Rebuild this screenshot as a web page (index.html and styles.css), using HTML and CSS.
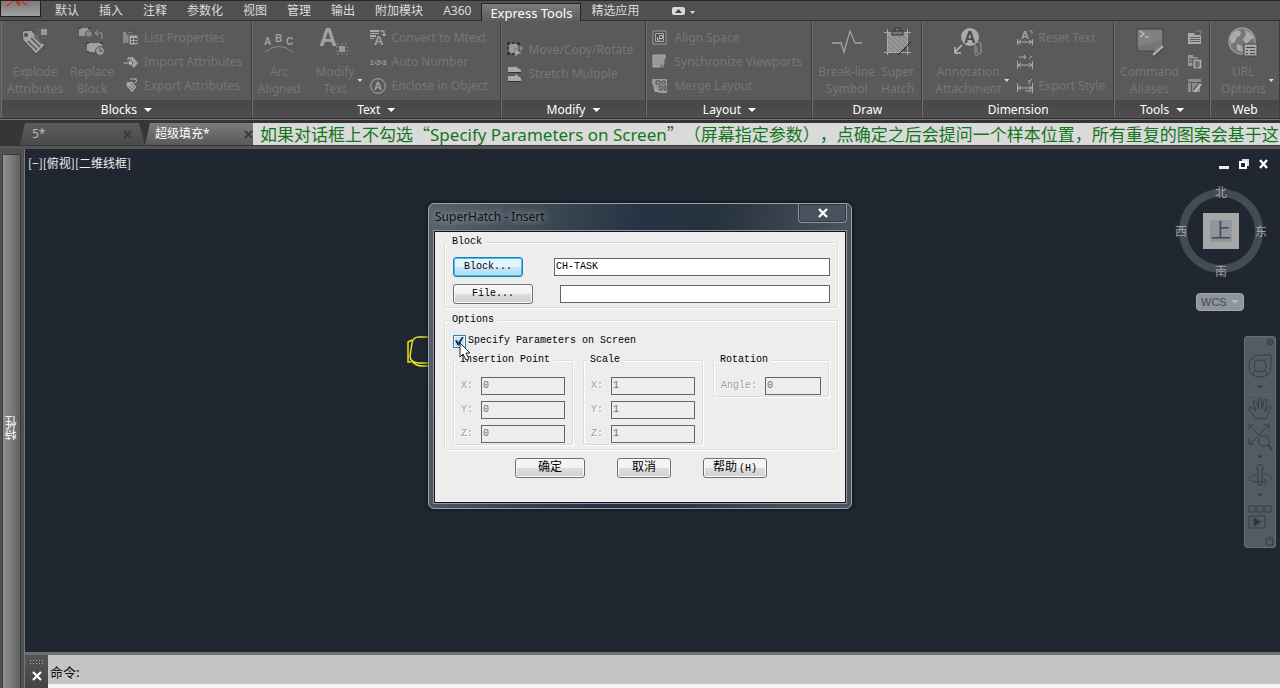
FILE: index.html
```html
<!DOCTYPE html>
<html lang="zh-CN">
<head>
<meta charset="utf-8">
<title>SuperHatch - Insert</title>
<link rel="stylesheet" href="styles.css">
</head>
<body>
<header class="menubar">
  <button class="app-button" aria-label="Application menu"><svg width="38" height="15" viewBox="0 0 38 15"><path d="M9 0 4 6 7 5 12 0ZM14 0 17 5 20 4 18 0ZM24 0 27 5 22 3 21 0Z" fill="#b93a35"/><path d="M8 0 4 6 7 3 11 0ZM22 0 26 4 24 0Z" fill="#e8665c"/></svg></button>
  <nav class="menu-tabs">
    <button>默认</button><button>插入</button><button>注释</button><button>参数化</button><button>视图</button><button>管理</button><button>输出</button><button>附加模块</button><button>A360</button><button class="active">Express Tools</button><button>精选应用</button>
    <button class="ribbon-toggle" aria-label="Minimize ribbon"><svg width="24" height="9" viewBox="0 0 24 9"><rect width="13" height="8" rx="2" fill="#d8d8d8"/><path d="M3 6 6.500 2 10 6Z" fill="#444"/><path d="M18 4h5l-2.500 3Z" fill="#ddd"/></svg></button>
  </nav>
</header>

<section class="ribbon">
  <section class="panel">
    <div class="tools blocks">
      <button class="big"><svg width="32" height="32" viewBox="0 0 32 32"><path d="M3 5 12 4 26 19 17 28 4 14Z" fill="#a2a2a2" stroke="#444"/><circle cx="7" cy="9" r="2" fill="#4c4c4c"/><path d="m9 15 9 9M12 12l9 9M15 10l8 8" stroke="#555" stroke-width="1.500"/><rect x="22" y="3" width="6" height="6" fill="#999"/><path d="M19 2v3m0 3v3m3 1h3" stroke="#777"/></svg><span>Explode<br>Attributes</span></button>
      <button class="big"><svg width="32" height="32" viewBox="0 0 32 32"><path d="M3 2h10v8H3Z" fill="#9a9a9a"/><path d="M2 1h3v2H2Zm10 0h3v2h-3Z" fill="#444"/><circle cx="13" cy="8" r="3.500" fill="#888" stroke="#555"/><path d="M20 7h6v6M22 4l-3 3 3 3" fill="none" stroke="#999"/><path d="M11 17h15v9H11Z" fill="#a0a0a0"/><path d="M10 16h3v2h-3Zm14 0h3v2h-3ZM10 25h3v2h-3Z" fill="#444"/><circle cx="24" cy="25" r="4.500" fill="#999" stroke="#555"/><path d="M24 22v3h3" fill="none" stroke="#555"/></svg><span>Replace<br>Block</span></button>
      <div class="list">
        <button class="small"><svg width="16" height="16" viewBox="0 0 16 16"><path d="M0 2h4l1 2h7v9H0Z" fill="#888"/><path d="M4 1h7v3H4Z" fill="#777" stroke="#444"/><path d="M6 5h9v10H6Z" fill="#aaa" stroke="#555"/><path d="M8 8h2v2H8Zm3 0h3v2h-3ZM8 11h2v2H8Zm3 0h3v2h-3Z" fill="#555"/></svg>List Properties</button>
        <button class="small"><svg width="16" height="16" viewBox="0 0 16 16"><path d="m5 3 5 0 5 6-4 5-3-3V8L4 6Z" fill="#a0a0a0"/><path d="M0 8h6V5l4 4-4 4v-3H0Z" fill="#bbb" stroke="#555"/></svg>Import Attributes</button>
        <button class="small"><svg width="16" height="16" viewBox="0 0 16 16"><path d="M3 4 9 3l5 6-5 6-6-7Z" fill="#a5a5a5" stroke="#555"/><path d="m6 8 4 4m-2-6 4 4" stroke="#666"/><path d="M7 1h7m-3-1 3 3-3 2" fill="none" stroke="#aaa"/></svg>Export Attributes</button>
      </div>
    </div>
    <button class="panel-title">Blocks<i class="caret"></i></button>
  </section>

  <section class="panel">
    <div class="tools text">
      <button class="big"><svg width="32" height="32" viewBox="0 0 32 32"><g class="glyph" font-size="10"><text x="1" y="19">A</text><text x="12" y="16">B</text><text x="23" y="19">C</text></g><path d="M2 26Q16 15 30 26" fill="none" stroke="#888"/></svg><span>Arc<br>Aligned</span></button>
      <div class="split"><button class="big"><svg width="32" height="32" viewBox="0 0 32 32"><text class="glyph" x="0" y="20" font-size="25">A</text><path d="M18 18h10v10H18Z" fill="none" stroke="#888" stroke-dasharray="2 2"/><rect x="20" y="20" width="6" height="6" fill="#999"/></svg><span>Modify<br>Text</span></button><i class="caret tiny"></i></div>
      <div class="list">
        <button class="small"><svg width="16" height="16" viewBox="0 0 16 16"><path d="M0 0h9v2H0Zm0 3h9v1H0Zm0 2h6v2H0Zm0 3h4v1H0Z" fill="#aaa"/><text class="glyph" x="4" y="15" font-size="13">A</text><path d="M10 1h4v4m-2-1 2 2 2-2" fill="none" stroke="#bbb"/></svg>Convert to Mtext</button>
        <button class="small"><svg width="16" height="16" viewBox="0 0 16 16"><text class="glyph" x="0" y="11" font-size="7">1›2›3</text></svg>Auto Number</button>
        <button class="small"><svg width="16" height="16" viewBox="0 0 16 16"><circle cx="8" cy="8" r="7.300" fill="none" stroke="#aaa"/><text class="glyph" x="4" y="12" font-size="11">A</text></svg>Enclose in Object</button>
      </div>
    </div>
    <button class="panel-title">Text<i class="caret"></i></button>
  </section>

  <section class="panel">
    <div class="tools modify">
      <div class="list">
        <button class="small"><svg width="16" height="16" viewBox="0 0 16 16"><path d="M2 2h9v9H2Z" fill="#999"/><path d="M0 0h3v3H0Zm5 0h2v2H5Zm5 0h3v3h-3ZM0 5h2v2H0Zm0 5h3v3H0Zm5 1h2v2H5Z" fill="#353535"/><path d="M8 6v9l3-3h4Z" fill="#aaa" stroke="#555" stroke-width=".5"/><path d="M14 4v5m-2-3h4" stroke="#999"/></svg>Move/Copy/Rotate</button>
        <button class="small"><svg width="16" height="16" viewBox="0 0 16 16"><path d="M1 1h7V0l6 4v2H1Zm0 9h7V8l6 4v3H1Z" fill="#aaa"/><path d="M1 6.500h13M1 15.500h13" stroke="#333"/></svg>Stretch Multiple</button>
      </div>
    </div>
    <button class="panel-title">Modify<i class="caret"></i></button>
  </section>

  <section class="panel">
    <div class="tools layout">
      <div class="list">
        <button class="small"><svg width="16" height="16" viewBox="0 0 16 16"><path d="M1 1h13v13H1Z" fill="#4c4c4c" stroke="#999"/><path d="M3.500 3.500h8v8h-8Z" fill="none" stroke="#aaa"/><path d="M7.500 5.500h3v3h-3ZM5.500 7v3h3" fill="none" stroke="#bbb"/></svg>Align Space</button>
        <button class="small"><svg width="16" height="16" viewBox="0 0 16 16"><path d="M1 1h12v12H1Z" fill="#999" stroke="#aaa"/><path d="M13 5v9H8m6-4-5 5" fill="none" stroke="#444"/><path d="M7 14h6l-3-4Z" fill="#777"/></svg>Synchronize Viewports</button>
        <button class="small"><svg width="16" height="16" viewBox="0 0 16 16"><path d="M0 1h15v14H7L0 6Z" fill="#999"/><path d="M4 3h4v3H4Zm6 0h3v3h-3ZM7 8h3v4H8Zm5 0h2v4h-2Z" fill="none" stroke="#505050"/><path d="m1 8 6 6H3" fill="#aaa"/></svg>Merge Layout</button>
      </div>
    </div>
    <button class="panel-title">Layout<i class="caret"></i></button>
  </section>

  <section class="panel">
    <div class="tools draw">
      <button class="big"><svg width="32" height="32" viewBox="0 0 32 32"><path d="M1 17h9l3 9 6-21 5 12h7" fill="none" stroke="#a3a3a3" stroke-width="1.300"/></svg><span>Break-line<br>Symbol</span></button>
      <button class="big"><svg width="32" height="32" viewBox="0 0 32 32"><path d="M6 6h19v14l-7 7H6Z" fill="#969696"/><path d="m6 10 16 16M6 15l12 12M9 8l14 14M14 8l11 11M19 8l6 6M6 20l7 7" stroke="#7c7c7c"/><path d="M5.500 3v26M25.500 3v26M2 6.500h27M2 26.500h27" fill="none" stroke="#a8a8a8"/><path d="m16 29 13-13" stroke="#222"/><path d="M10 5h11v4H10Zm3 0V2h5v3" fill="#777" stroke="#303030"/></svg><span>Super<br>Hatch</span></button>
    </div>
    <div class="panel-title">Draw</div>
  </section>

  <section class="panel">
    <div class="tools dimension">
      <div class="split"><button class="big"><svg width="32" height="32" viewBox="0 0 32 32"><circle cx="18" cy="11" r="9" fill="#aaa"/><text class="dark-glyph" x="12" y="17" font-size="16">A</text><path d="m10 19-7 7m0-5v6h6" fill="none" stroke="#bbb" stroke-width="1.500"/><path d="M25 20v6q0 2 2 2t2-2v-7q0-3-3-3t-3 3v8q0 3 3 3" fill="none" stroke="#999"/></svg><span>Annotation<br>Attachment</span></button><i class="caret tiny"></i></div>
      <div class="list">
        <button class="small"><svg width="16" height="16" viewBox="0 0 16 16"><path d="M.5 9v6m15-6v6M1 12h14M4 10l-3 2 3 2m8-4 3 2-3 2" fill="none" stroke="#aaa"/><text class="glyph" x="4" y="9" font-size="11">A</text><path d="M12 1h3v3" fill="none" stroke="#999"/></svg>Reset Text</button>
        <button class="small" aria-label="Reassociate"><svg width="16" height="16" viewBox="0 0 16 16"><path d="M.5 7v8m15-8v8M1 11h14M4 9l-3 2 3 2m8-4 3 2-3 2M2 3h7M7 1l2 2-2 2m8-3-3 3" fill="none" stroke="#aaa"/></svg></button>
        <button class="small"><svg width="16" height="16" viewBox="0 0 16 16"><path d="M.5 5v9m15-9v10M1 10h14M4 8l-3 2 3 2m8-4 3 2-3 2M8 13h7m-3-9 3-3m-3 1v4" fill="none" stroke="#aaa"/></svg>Export Style</button>
      </div>
    </div>
    <div class="panel-title">Dimension</div>
  </section>

  <section class="panel">
    <div class="tools commands">
      <button class="big"><svg width="32" height="32" viewBox="0 0 32 32"><path d="M3 3h26v19q-5 5-10 3H5q-2 0-2-3Z" fill="#757575" stroke="#474747"/><path d="M4 4h24v10L4 20Z" fill="#808080"/><path d="m6 5 4 3-4 3m5 0h4" fill="none" stroke="#bbb" stroke-width="1.500"/><path d="m19 30 10-9" stroke="#444" stroke-width="4"/><path d="m19 29 10-9" stroke="#aaa" stroke-width="2.500"/></svg><span>Command<br>Aliases</span></button>
      <div class="list">
        <button class="small" aria-label="Command alias file"><svg width="16" height="16" viewBox="0 0 16 16"><path d="M1 3h6l1 2h6v9H1Z" fill="#aaa"/><path d="M3 7.500h10M3 9.500h10M3 11.500h10" stroke="#606060"/><path d="M9 1h5v3" fill="none" stroke="#888"/></svg></button>
        <button class="small" aria-label="System variables"><svg width="16" height="16" viewBox="0 0 16 16"><path d="M1 1h5v2h5v9H1Z" fill="#999"/><path d="M2 5h4M2 8h4" stroke="#444"/><path d="M6 5h9v10H6Z" fill="#aaa" stroke="#505050"/><path d="M8 8h5M8 10h5M8 12h5M10 7v7" stroke="#555"/></svg></button>
        <button class="small" aria-label="Full screen edit"><svg width="16" height="16" viewBox="0 0 16 16"><path d="M1 1h13v3H1Zm0 4h3v9H1Zm4 0h8v9H5Z" fill="#8c8c8c"/><path d="m8 14 6-8" stroke="#bbb" stroke-width="2"/><path d="m6 12 7-8" stroke="#444"/></svg></button>
      </div>
    </div>
    <button class="panel-title">Tools<i class="caret"></i></button>
  </section>

  <section class="panel">
    <div class="tools web">
      <div class="split"><button class="big"><svg width="32" height="32" viewBox="0 0 32 32"><circle cx="15" cy="15" r="13" fill="#777" stroke="#999" stroke-width="1.500"/><path d="m5 7 6-3 3 2-1 4-3 1-2 5-4 2-1-6Zm13-3 6 3 3 5-4 2-4 5-3-6 3-4Zm-8 14 5 2 1 6-6-2Z" fill="#aaa"/><path d="M17 18h13v12H17Z" fill="#ababab" stroke="#444"/><path d="M19 21.500h9M19 24.500h2m2 0h5m-9 3h2m2 0h5" stroke="#444"/></svg><span>URL<br>Options</span></button><i class="caret tiny"></i></div>
    </div>
    <div class="panel-title">Web</div>
  </section>
</section>

<div class="filebar">
  <button class="file-tab"><span>5*</span><svg width="9" height="9" viewBox="0 0 9 9"><path d="m1 1 7 7m0-7L1 8" stroke="#3b3b3b" stroke-width="2"/></svg></button>
  <button class="file-tab current"><span>超级填充*</span><svg width="9" height="9" viewBox="0 0 9 9"><path d="m1 1 7 7m0-7L1 8" stroke="#3b3b3b" stroke-width="2"/></svg></button>
  <p class="caption">如果对话框上不勾选“<span>Specify Parameters on Screen</span>”（屏幕指定参数），点确定之后会提问一个样本位置，所有重复的图案会基于这</p>
</div>

<main class="workspace">
  <aside class="palette"><div class="palette-body"><i class="grip"></i><span>特性</span></div></aside>
  <div class="stage">
    <section class="canvas">
      <div class="canvas-head"><span>[−][俯视][二维线框]</span>
        <svg width="52" height="12" viewBox="0 0 52 12"><path d="M1 8h10v3H1Z" fill="#eee"/><path d="M24 1h7v7h-2V3h-5Z" fill="#ddd"/><path d="M22 4h6v6h-6Z" fill="none" stroke="#fff" stroke-width="2"/><path d="m42 2 7 8m0-8-7 8" stroke="#fff" stroke-width="2.400"/></svg>
      </div>
      <svg class="entity" width="36" height="32" viewBox="0 0 36 32"><path d="M34 1H12Q6 1 5 7L3 20q0 6 8 7h23M5 4 1 6v20h3M4 24q4 6 11 6h19" fill="none" stroke="#e6e41e" stroke-width="1.500"/></svg>
      <div class="viewcube">
        <svg width="92" height="92" viewBox="0 0 92 92"><circle cx="46" cy="46" r="38" fill="none" stroke="#444b53" stroke-width="8"/></svg>
        <button class="face">上</button><span class="north">北</span><span class="west">西</span><span class="east">东</span><span class="south">南</span>
      </div>
      <button class="wcs">WCS<i class="caret"></i></button>
      <div class="navbar"><svg width="32" height="212" viewBox="0 0 32 212" fill="none" stroke="#373d45"><circle cx="26" cy="6" r="3"/><path d="m24 4 4 4m0-4-4 4" /><circle cx="16" cy="30" r="6"/><path d="M5 30q0-11 11-11h11v11q0 11-11 11T5 30Zm4-7 3 3m11-3-3 3M9 37l3-3m11 3-3-3"/><path d="M14 50h4l-2 2Z" fill="#30363d"/><path d="M1 58.500h30" stroke="#5f656c"/><path d="m11 82-6-9q0-3 3-1l4 3-3-9q1-3 3 0l3 7-1-10q2-2 3 0l1 10 2-9q2-2 3 1l-2 11 3-5q2-2 3 0l-5 12Z"/><path d="m6 90 17 17M24 90 6 108M5 94v-5h5m10 0h5v5M5 103v5h5"/><circle cx="20" cy="105" r="5.500" fill="#555b63"/><path d="m24 109 4 5" stroke-width="2"/><path d="M14 120h4l-2 2Z" fill="#30363d"/><path d="M14 149v-16h-2l4-5 4 5h-2v16Zm-1-10c-10 0-10 7 0 7h10l-3-3m3 3-3 3M19 138c9 0 9 4 7 6"/><path d="M14 158h4l-2 2Z" fill="#30363d"/><path d="M5 170h6v6H5Zm8 0h6v6h-6Zm8 0h6v6h-6ZM5 180h16v12H5Z"/><path d="m10 182 7 4-7 4Z" fill="#30363d"/><path d="M22 203h7v6h-7Zm1 0q3-5 6 0"/></svg></div>

      <section class="dialog" role="dialog" aria-labelledby="dialog-title">
        <header class="dialog-title"><h1 id="dialog-title">SuperHatch - Insert</h1><button class="dialog-close" aria-label="Close"><svg width="10" height="8" viewBox="0 0 10 8"><path d="m1 0 8 8M9 0 1 8" stroke="#fff" stroke-width="2.400"/></svg></button></header>
        <form class="dialog-body">
          <fieldset class="source"><legend>Block</legend>
            <div class="source-row"><button type="button" class="btn focused">Block...</button><input class="field" aria-label="Block name" value="CH-TASK"></div>
            <div class="source-row"><button type="button" class="btn file">File...</button><input class="field" aria-label="File name"></div>
          </fieldset>
          <fieldset class="options"><legend>Options</legend>
            <label class="check"><input type="checkbox" checked>Specify Parameters on Screen</label>
            <div class="groups">
              <fieldset class="group"><legend>Insertion Point</legend>
                <label>X:<input class="field" value="0" disabled></label><label>Y:<input class="field" value="0" disabled></label><label>Z:<input class="field" value="0" disabled></label></fieldset>
              <fieldset class="group"><legend>Scale</legend>
                <label>X:<input class="field" value="1" disabled></label><label>Y:<input class="field" value="1" disabled></label><label>Z:<input class="field" value="1" disabled></label></fieldset>
              <fieldset class="group rotation"><legend>Rotation</legend>
                <label>Angle:<input class="field" value="0" disabled></label></fieldset>
            </div>
          </fieldset>
          <div class="actions"><button type="button" class="btn">确定</button><button type="button" class="btn cancel">取消</button><button type="button" class="btn help">帮助<span>(H)</span></button></div>
        </form>
        <svg class="cursor" width="13" height="20" viewBox="0 0 13 20"><path d="M1 1v14l3-3 3 6 3-1-3-6h4Z" fill="#fff" stroke="#222"/></svg>
      </section>
    </section>
    <footer class="command">
      <div class="command-side"><i class="grip"></i><button aria-label="Close command line"><svg width="10" height="10" viewBox="0 0 10 10"><path d="m1 1 8 8M9 1 1 9" stroke="#fff" stroke-width="2.200"/></svg></button></div>
      <div class="command-log">命令:</div>
    </footer>
  </div>
</main>
</body>
</html>
```
FILE: styles.css
```css
* { box-sizing: border-box; }
body {
  margin: 0;
  height: 100vh;
  display: flex;
  flex-direction: column;
  overflow: hidden;
  background: #3a3a3a;
  color: #eee;
  font: 12px/16px "Noto Sans", "Noto Sans CJK SC", sans-serif;
}
button { font: inherit; color: inherit; border: 0; background: none; padding: 0; margin: 0; }
svg { display: block; flex: none; overflow: visible; }
.glyph { fill: #a0a0a0; font-family: "Liberation Sans", sans-serif; font-weight: 700; }
.dark-glyph { fill: #484848; font-family: "Liberation Sans", sans-serif; font-weight: 700; }
.caret { width: 8px; height: 4px; background: currentColor; clip-path: polygon(0 0, 100% 0, 50% 100%); flex: none; }
.caret.tiny { width: 5px; height: 3px; color: #ddd; margin-bottom: 18px; }

/* menu */
.menubar { display: flex; height: 21px; background: #505050; border-top: 1px solid #23282f; border-bottom: 1px solid #303030; flex: none; }
.app-button { width: 41px; height: 16px; background: linear-gradient(#7a7a7a, #a0a0a0); border: 1px solid #1e1e1e; border-top: 0; }
.menu-tabs { display: flex; margin-left: 4px; height: 20px; }
.menu-tabs button { padding: 0 10px; height: 20px; color: #dcdcdc; line-height: 20px; }
.menu-tabs .active { padding: 0 8px; background: linear-gradient(#7b7b7b, #5d5d5d); border: 1px solid #262626; border-bottom: 0; color: #fff; margin-top: 2px; font-size: 13px; line-height: 16px; height: 18px; }
.menu-tabs .ribbon-toggle { margin-left: 13px; }

/* ribbon */
.ribbon {
  display: grid;
  grid-template-columns: 251fr 249fr 146fr 166fr 110fr 192fr 96fr 70fr;
  height: 98px;
  padding-left: 1px;
  flex: none;
  background: #5a5a5a;
  border-bottom: 1px solid #2e2e2e;
}
.panel { display: flex; flex-direction: column; min-width: 0; border-left: 1px solid #6c6c6c; border-right: 1px solid #404040; }
.tools { display: flex; flex: 1; min-height: 0; padding: 5px 0 0 5px; color: #767676; white-space: nowrap; }
.big { display: flex; flex-direction: column; align-items: center; gap: 5px; line-height: 17px; text-align: center; }
.big span { display: block; }
.list { display: flex; flex-direction: column; }
.small { display: flex; align-items: center; gap: 5px; height: 24px; }
.split { display: flex; align-items: flex-end; gap: 3px; }
.split .big { align-self: flex-start; }
.blocks { gap: 7px; }
.blocks .list { margin-left: 2px; }
.text { gap: 15px; }
.text .list { margin-left: -7px; }
.modify { padding-top: 17px; }
.modify .small, .layout .small { gap: 6px; }
.draw { gap: 6px; }
.dimension { padding-left: 12px; gap: 8px; }
.commands { gap: 8px; }
.web { padding-left: 10px; }
.panel-title { display: flex; justify-content: center; align-items: center; gap: 7px; height: 18px; padding-top: 2px; background: linear-gradient(#474747, #4e4e4e); color: #fff; }

/* drawing tabs */
.filebar { display: flex; height: 30px; flex: none; padding: 3px 0 4px 20px; border-top: 1px solid #777; background: linear-gradient(#363636 26px, #555 26px); }
.file-tab { display: flex; align-items: center; justify-content: space-between; width: 125px; padding: 0 13px 0 12px; background: linear-gradient(#5c5c5c, #4a4a4a); color: #bbb; clip-path: polygon(5px 0, 119px 0, 125px 100%, 0 100%); flex: none; }
.file-tab.current { width: 108px; padding: 0 0 0 10px; background: linear-gradient(#7b7b7b, #595959); color: #fff; clip-path: polygon(5px 0, 100% 0, 100% 100%, 0 100%); }
.caption { flex: 1; min-width: 0; margin: 0; padding-left: 7px; overflow-x: clip; white-space: nowrap; text-spacing-trim: space-all; background: #dadada; color: #13761d; font: 17px/22px "Noto Sans CJK SC", sans-serif; }
.caption span { font-family: "Noto Sans", sans-serif; }

/* work area */
.workspace { display: flex; flex: 1; min-height: 0; }
.palette { width: 25px; padding: 5px 3px 0 2px; background: #505050; flex: none; border-right: 1px solid #777; }
.palette-body { display: flex; flex-direction: column; justify-content: center; align-items: center; height: 100%; padding: 12px 0 0 1px; position: relative; background: linear-gradient(90deg, #929292, #606060); border: 1px solid #3b3b3b; border-bottom: 0; color: #fff; }
.palette-body span { writing-mode: vertical-rl; transform: rotate(180deg); }
.grip { width: 12px; height: 4px; background: radial-gradient(circle, #2d2d2d 35%, transparent 45%) 0 0 / 2px 2px; }
.palette .grip { position: absolute; top: 2px; }
.stage { display: flex; flex-direction: column; flex: 1; min-width: 0; }
.canvas { flex: 1; position: relative; min-height: 0; background: #202730; overflow: hidden; }
.canvas-head { display: flex; justify-content: space-between; padding: 6px 10px 0 3px; font-family: "Noto Sans CJK SC", sans-serif; }
.canvas-head svg { margin-top: 3px; }
.entity { position: absolute; left: 382px; top: 187px; }
.viewcube { position: absolute; right: 13px; top: 36px; width: 92px; height: 92px; color: #a0a4a9; }
.viewcube > * { position: absolute; }
.face { left: 28px; top: 28px; width: 36px; height: 36px; border: 7px solid #a7a7aa; background: #92959d; color: #454a55; font-size: 20px; line-height: 20px; }
.north { left: 40px; top: 0; }
.west { left: 0; top: 39px; }
.east { right: 0; top: 39px; }
.south { left: 40px; bottom: -3px; }
.wcs { position: absolute; right: 36px; top: 144px; display: flex; align-items: center; justify-content: space-between; width: 48px; height: 18px; padding: 0 4px; border: 1px solid #a2a8b0; border-radius: 4px; background: #8f959d; color: #454b54; font: 11px "Liberation Sans", sans-serif; }
.wcs .caret { color: #b0b5bb; }
.navbar { position: absolute; right: 4px; top: 187px; border-radius: 4px; background: #555b63; box-shadow: 0 0 0 1px #666c74 inset; }

/* dialog window */
.dialog { position: absolute; left: 403px; top: 54px; width: 424px; padding: 0 5px 5px; color: #000; border: 1px solid #9aa2ab; border-radius: 6px; background: linear-gradient(100deg, #59626c, #263342 45%, #26313e 60%, #4a535e 90%); box-shadow: 0 0 5px #0b0f14; }
.dialog-title { display: flex; justify-content: space-between; height: 27px; }
.dialog-title h1 { margin: 0; padding: 0 9px 0 1px; font: 12px/26px "Noto Sans", sans-serif; color: #0c0f13; text-shadow: 0 0 6px #98a0a8, 0 0 8px #98a0a8; }
.dialog-close { display: flex; justify-content: center; align-items: center; width: 49px; height: 19px; margin-right: -1px; border: 1px solid #8b949e; border-top: 0; border-radius: 0 0 4px 4px; background: #49525d; box-shadow: inset 0 0 0 1px #313a45; }
.dialog-body { padding: 4px 7px 24px 9px; border: 1px solid #10161e; background: #ededed; box-shadow: 0 0 0 1px #8d959f; font: 10px/12px "Liberation Mono", "Noto Sans CJK SC", monospace; }
fieldset { margin: 0; padding: 0; min-width: 0; border: 1px solid #dcdcdc; border-radius: 2px; box-shadow: inset 1px 1px #fff, 1px 1px #fff; }
legend { margin-left: -4px; padding: 0 3px; height: 12px; background: #ededed; }
.source { padding: 9px 7px 3px 8px; }
.source-row { display: flex; gap: 31px; align-items: center; }
.source-row + .source-row { margin-top: 7px; gap: 27px; }
.btn { width: 70px; height: 20px; border: 1px solid #707070; border-radius: 3px; background: linear-gradient(#f4f4f4 48%, #dedede 50%, #d0d0d0); box-shadow: inset 0 0 0 1px #fafafa; }
.btn.focused { border-color: #1d7fae; background: linear-gradient(#e6f5fd 48%, #c8e8f9 50%, #b2daf0); box-shadow: inset 0 0 0 1px #35c5f5; }
.btn.file { width: 80px; }
.field { height: 18px; min-width: 0; padding: 0 1px 1px; margin: 0; border: 1px solid #646464; border-radius: 0; background: #fff; color: #000; font: inherit; }
.field:disabled { background: #ededed; color: #6d6d6d; }
.source-row .field { flex: 1; }
.options { margin-top: 6px; padding: 8px 8px 4px; }
.check { display: flex; align-items: center; gap: 2px; height: 14px; }
.check input { appearance: none; margin: 0; width: 13px; height: 13px; border: 1px solid #3d7ea8; background: #c9e4f5; box-shadow: inset 0 0 0 1px #eef8fd; }
.check input:checked::before { content: ""; display: block; width: 9px; height: 9px; margin: 1px; background: #17306b; clip-path: polygon(0 45%, 20% 40%, 38% 65%, 80% 0, 100% 0, 45% 100%, 30% 100%); }
.groups { display: flex; align-items: flex-start; gap: 10px; margin-top: 6px; }
.group { display: flex; flex-direction: column; width: 120px; padding: 11px 7px 1px; }
.group label { display: flex; justify-content: space-between; align-items: center; color: #9c9c9c; text-shadow: 1px 1px #fff; }
.group label + label { margin-top: 6px; }
.group .field { width: 84px; }
.rotation { width: 116px; }
.rotation .field { width: 56px; }
.actions { display: flex; margin: 8px 0 0 71px; }
.actions .btn { font-size: 12px; line-height: 16px; }
.actions .help span { font-size: 10px; margin-left: 2px; }
.actions .cancel { width: 54px; margin-left: 32px; }
.actions .help { width: 64px; margin-left: 32px; }
.cursor { position: absolute; left: 30px; top: 138px; }

/* command line */
.command { display: flex; height: 36px; border-top: 3px solid #707070; flex: none; }
.command-side { display: flex; flex-direction: column; align-items: center; gap: 6px; width: 23px; padding-top: 4px; background: linear-gradient(#555, #444); }
.command-side .grip { width: 16px; height: 6px; background: radial-gradient(circle, #aaa 35%, transparent 45%) 0 0 / 3px 3px; }
.command-log { flex: 1; padding: 8px 2px 2px; background: #c4c4c4; border-bottom: 4px solid #f5f5f5; color: #111; font: 13px/17px "Noto Sans CJK SC", sans-serif; }
```
